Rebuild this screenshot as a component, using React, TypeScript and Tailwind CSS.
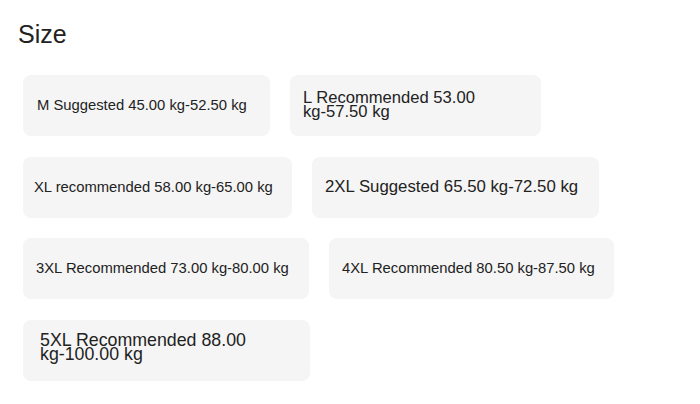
import React from "react";

type Chip = { label: string; w: string; pl: string; size: string; wrap?: string };

const chips: Chip[] = [
  { label: "M Suggested 45.00 kg-52.50 kg", w: "w-[247px]", pl: "pl-[14px]", size: "text-[14.8px]" },
  { label: "L Recommended 53.00 kg-57.50 kg", w: "w-[251px]", pl: "pl-[13px]", size: "text-[16.6px]", wrap: "w-[185px] leading-[13.5px] -mt-[2px]" },
  { label: "XL recommended 58.00 kg-65.00 kg", w: "w-[269px]", pl: "pl-[11px]", size: "text-[14.8px]" },
  { label: "2XL Suggested 65.50 kg-72.50 kg", w: "w-[287px]", pl: "pl-[13px]", size: "text-[16.8px]" },
  { label: "3XL Recommended 73.00 kg-80.00 kg", w: "w-[286px]", pl: "pl-[13px]", size: "text-[14.8px]" },
  { label: "4XL Recommended 80.50 kg-87.50 kg", w: "w-[285px]", pl: "pl-[13px]", size: "text-[14.8px]" },
  { label: "5XL Recommended 88.00 kg-100.00 kg", w: "w-[287px]", pl: "pl-[17px]", size: "text-[17.8px]", wrap: "w-[215px] leading-[13.5px] -mt-[5px]" },
];

export default function App() {
  return (
    <div
      className="w-[700px] h-[404px] bg-white text-[#222222] overflow-hidden"
      style={{ fontFamily: '"Liberation Sans", Arial, sans-serif' }}
    >
      <h2 className="pl-[18px] pt-[22px] text-[25px] leading-none font-normal">Size</h2>
      <div className="mt-[28px] ml-[23px] w-[660px] flex flex-wrap gap-x-[20px] gap-y-[20.5px]">
        {chips.map((c) => (
          <div
            key={c.label}
            className={`${c.w} ${c.pl} h-[61px] rounded-lg bg-[#f5f5f5] flex items-center`}
          >
            <span className={`${c.size} ${c.wrap ?? "whitespace-nowrap"}`}>{c.label}</span>
          </div>
        ))}
      </div>
    </div>
  );
}
